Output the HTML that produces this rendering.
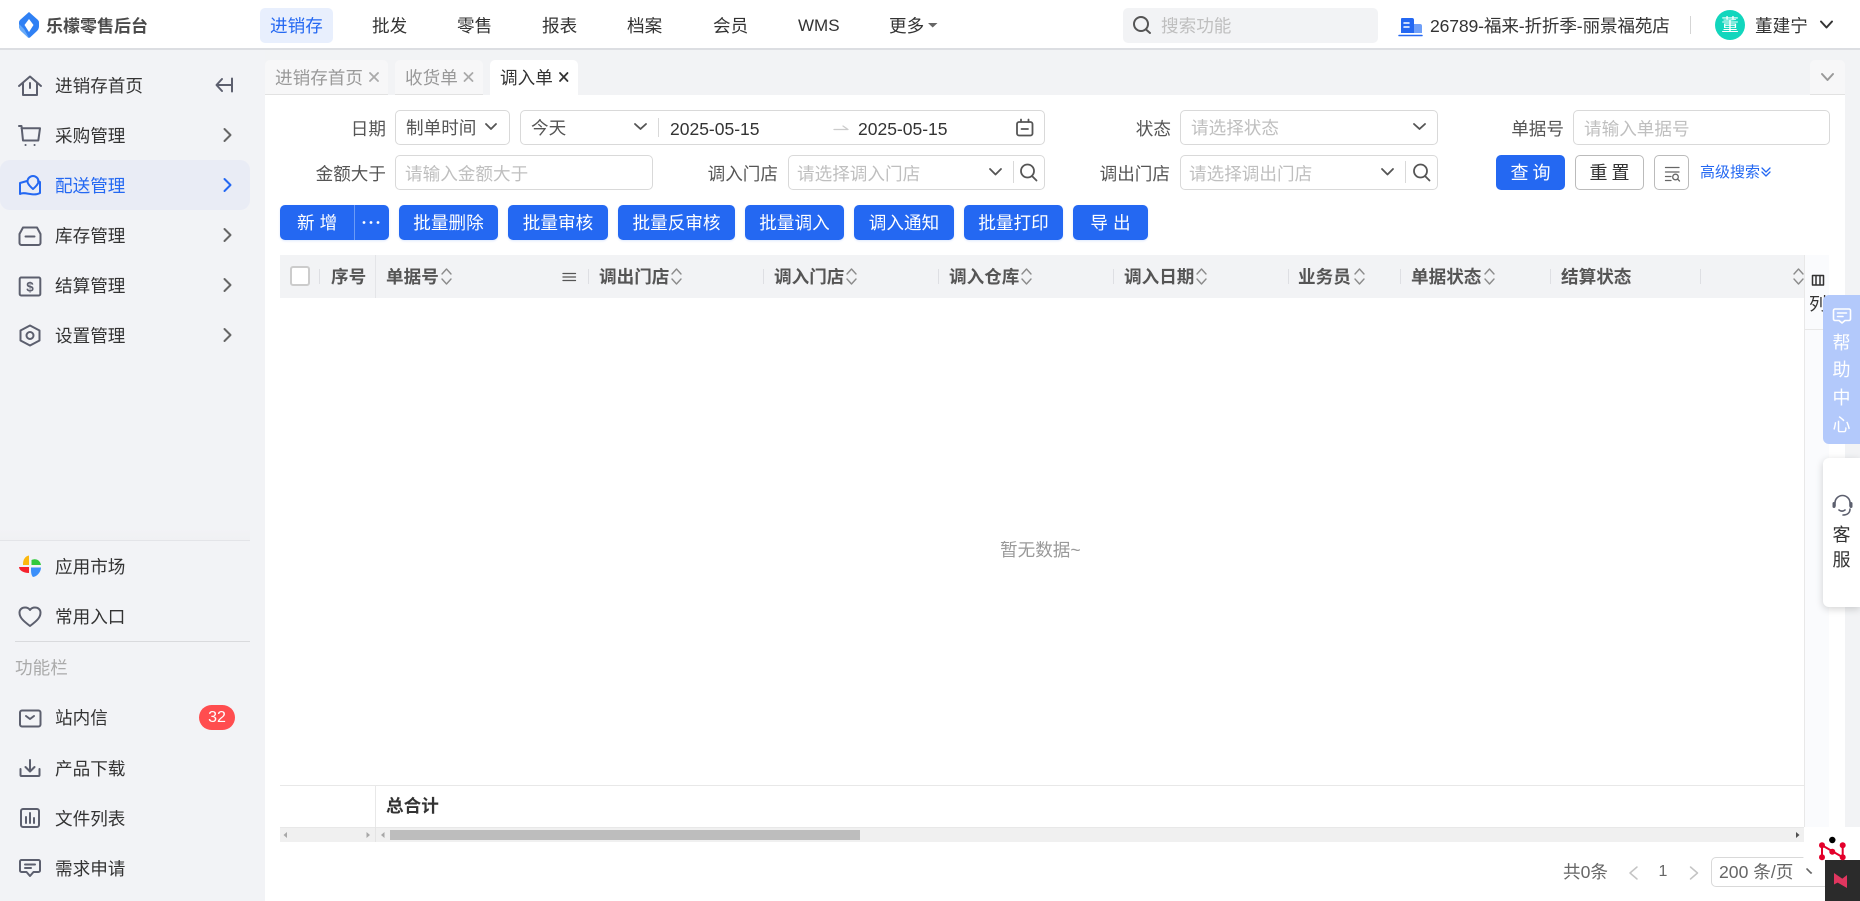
<!DOCTYPE html>
<html lang="zh"><head><meta charset="utf-8"><title>调入单</title>
<style>
*{box-sizing:border-box}
html,body{margin:0;padding:0;width:1860px;height:901px;overflow:hidden;background:#fff}
body{position:relative;font:17.6px/24px "Liberation Sans","Noto Sans CJK SC",sans-serif;color:#333}
.b{position:absolute}
.t{position:absolute;white-space:nowrap;line-height:24px;height:24px}
.r{text-align:right}
.c{text-align:center}
.box{position:absolute;background:#fff;border:1px solid #d9d9d9;border-radius:5px;height:35px}
.ph{color:#bfbfbf}
.lb{color:#555}
.btn{position:absolute;top:205px;height:35px;background:#2468f2;border-radius:5px;color:#fff;text-align:center;line-height:37px;font-size:17.6px;box-shadow:0 1px 2px rgba(36,104,242,.15)}
.th{font-weight:700;color:#555;font-size:17.6px}
.dv{position:absolute;top:269px;width:1px;height:15px;background:#dedfe3}
.nv{color:#333}
.sd{color:#333}
svg{position:absolute;left:0;top:0}
</style></head><body>

<!-- header -->
<div class="b" style="left:0;top:0;width:1860px;height:50px;background:#fff;border-bottom:2px solid #dcdee2"></div>
<div class="t" style="left:46px;top:15px;font-weight:700;font-size:17px;color:#4b4b4b">乐檬零售后台</div>
<div class="b" style="left:260px;top:8px;width:73px;height:35px;background:#e8effd;border-radius:5px"></div>
<div class="t" style="left:270px;top:14px;color:#2468f2">进销存</div>
<div class="t nv" style="left:372px;top:14px">批发</div>
<div class="t nv" style="left:457px;top:14px">零售</div>
<div class="t nv" style="left:542px;top:14px">报表</div>
<div class="t nv" style="left:627px;top:14px">档案</div>
<div class="t nv" style="left:713px;top:14px">会员</div>
<div class="t nv" style="left:798px;top:14px;font-size:17px">WMS</div>
<div class="t nv" style="left:889px;top:14px">更多</div>
<div class="b" style="left:1123px;top:8px;width:255px;height:35px;background:#f2f3f5;border-radius:5px"></div>
<div class="t ph" style="left:1161px;top:14px">搜索功能</div>
<div class="t" style="left:1430px;top:14px;width:240px;letter-spacing:-.15px">26789-福来-折折季-丽景福苑店</div>
<div class="b" style="left:1690px;top:16px;width:1px;height:18px;background:#d5d5d5"></div>
<div class="b c" style="left:1715px;top:10px;width:30px;height:30px;border-radius:50%;background:#12d6bd;color:#fff;line-height:30px">董</div>
<div class="t" style="left:1755px;top:14px">董建宁</div>

<!-- sidebar -->
<div class="b" style="left:0;top:50px;width:265px;height:851px;background:#f2f3f6"></div>
<div class="b" style="left:0;top:160px;width:250px;height:50px;background:#e9ecf5;border-radius:10px"></div>
<div class="t sd" style="left:55px;top:74px">进销存首页</div>
<div class="t sd" style="left:55px;top:124px">采购管理</div>
<div class="t" style="left:55px;top:174px;color:#2468f2">配送管理</div>
<div class="t sd" style="left:55px;top:224px">库存管理</div>
<div class="t sd" style="left:55px;top:274px">结算管理</div>
<div class="t sd" style="left:55px;top:324px">设置管理</div>
<div class="b" style="left:0;top:528px;width:250px;height:12px;background:linear-gradient(#f2f3f6,#f0f1f3)"></div>
<div class="b" style="left:0;top:540px;width:250px;height:1px;background:#e3e4e8"></div>
<div class="t sd" style="left:55px;top:555px">应用市场</div>
<div class="t sd" style="left:55px;top:605px">常用入口</div>
<div class="b" style="left:15px;top:641px;width:235px;height:1px;background:#d9dadd"></div>
<div class="t" style="left:15px;top:656px;color:#aaa">功能栏</div>
<div class="t sd" style="left:55px;top:706px">站内信</div>
<div class="b c" style="left:199px;top:705px;width:36px;height:25px;border-radius:13px;background:#ff4d4f;color:#fff;line-height:25px;font-size:16px">32</div>
<div class="t sd" style="left:55px;top:757px">产品下载</div>
<div class="t sd" style="left:55px;top:807px">文件列表</div>
<div class="t sd" style="left:55px;top:857px">需求申请</div>

<!-- tabs -->
<div class="b" style="left:265px;top:50px;width:1595px;height:45px;background:#f2f3f5"></div>
<div class="b" style="left:1845px;top:95px;width:15px;height:806px;background:#f2f3f5"></div>
<div class="b" style="left:265px;top:60px;width:123px;height:35px;background:#f7f7f8;border-bottom:1px solid #e2e2e2;border-radius:5px 5px 0 0"></div>
<div class="b" style="left:395px;top:60px;width:88px;height:35px;background:#f7f7f8;border-bottom:1px solid #e2e2e2;border-radius:5px 5px 0 0"></div>
<div class="b" style="left:490px;top:60px;width:88px;height:35px;background:#fff;border-radius:5px 5px 0 0"></div>
<div class="b" style="left:1810px;top:60px;width:35px;height:35px;background:#f7f7f8;border-bottom:1px solid #e2e2e2;border-radius:5px 5px 0 0"></div>
<div class="t" style="left:275px;top:66px;color:#999;font-size:17.6px">进销存首页</div>
<div class="t" style="left:405px;top:66px;color:#999;font-size:17.6px">收货单</div>
<div class="t" style="left:500px;top:66px;color:#333;font-size:17.6px">调入单</div>

<!-- filter row 1 -->
<div class="t lb r" style="left:315px;width:71px;top:117px">日期</div>
<div class="box" style="left:395px;top:110px;width:115px"></div>
<div class="t lb" style="left:406px;top:116px">制单时间</div>
<div class="box" style="left:520px;top:110px;width:525px"></div>
<div class="t lb" style="left:531px;top:116px">今天</div>
<div class="b" style="left:658px;top:118px;width:1px;height:19px;background:#d9d9d9"></div>
<div class="t" style="left:670px;top:117px;font-size:17.5px">2025-05-15</div>
<div class="t" style="left:858px;top:117px;font-size:17.5px">2025-05-15</div>
<div class="t lb r" style="left:1100px;width:71px;top:117px">状态</div>
<div class="box" style="left:1180px;top:110px;width:258px"></div>
<div class="t ph" style="left:1191px;top:116px">请选择状态</div>
<div class="t lb r" style="left:1490px;width:74px;top:117px">单据号</div>
<div class="box" style="left:1573px;top:110px;width:257px"></div>
<div class="t ph" style="left:1584px;top:117px">请输入单据号</div>

<!-- filter row 2 -->
<div class="t lb r" style="left:300px;width:86px;top:162px">金额大于</div>
<div class="box" style="left:395px;top:155px;width:258px"></div>
<div class="t ph" style="left:405px;top:162px">请输入金额大于</div>
<div class="t lb r" style="left:690px;width:88px;top:162px">调入门店</div>
<div class="box" style="left:788px;top:155px;width:257px"></div>
<div class="t ph" style="left:797px;top:162px">请选择调入门店</div>
<div class="b" style="left:1013px;top:161px;width:1px;height:22px;background:#d9d9d9"></div>
<div class="t lb r" style="left:1082px;width:88px;top:162px">调出门店</div>
<div class="box" style="left:1180px;top:155px;width:258px"></div>
<div class="t ph" style="left:1189px;top:162px">请选择调出门店</div>
<div class="b" style="left:1405px;top:161px;width:1px;height:22px;background:#d9d9d9"></div>
<div class="b c" style="left:1496px;top:155px;width:69px;height:35px;background:#2468f2;border-radius:5px;color:#fff;line-height:37px;font-size:18px;letter-spacing:4px;text-indent:4px">查询</div>
<div class="b c" style="left:1575px;top:155px;width:69px;height:35px;background:#fff;border:1px solid #bbb;border-radius:5px;line-height:35px;font-size:18px;letter-spacing:4px;text-indent:4px">重置</div>
<div class="b" style="left:1654px;top:155px;width:35px;height:35px;background:#fff;border:1px solid #bbb;border-radius:5px"></div>
<div class="t" style="left:1700px;top:161px;font-size:15px;color:#2468f2">高级搜索</div>

<!-- action buttons -->
<div class="btn" style="left:280px;width:109px;text-align:left;padding-left:17px;letter-spacing:5px">新增</div>
<div class="b" style="left:354px;top:205px;width:1px;height:35px;background:#6a9bf6"></div>
<div class="btn" style="left:399px;width:99px">批量删除</div>
<div class="btn" style="left:508px;width:100px">批量审核</div>
<div class="btn" style="left:618px;width:117px">批量反审核</div>
<div class="btn" style="left:745px;width:99px">批量调入</div>
<div class="btn" style="left:854px;width:100px">调入通知</div>
<div class="btn" style="left:964px;width:99px">批量打印</div>
<div class="btn" style="left:1073px;width:75px;letter-spacing:5px;text-indent:5px">导出</div>

<!-- table -->
<div class="b" style="left:280px;top:255px;width:1524px;height:43px;background:#f2f3f5"></div>
<div class="b" style="left:1804px;top:255px;width:25px;height:572px;background:#fafbfd;border-left:1px solid #e8e8e8"></div>
<div class="b" style="left:1805px;top:329px;width:24px;height:1px;background:#e8e8e8"></div>
<div class="b" style="left:290px;top:266px;width:20px;height:20px;background:#fff;border:2px solid #ccc;border-radius:3px"></div>
<div class="dv" style="left:319px"></div>
<div class="b" style="left:375px;top:255px;width:1px;height:43px;background:#e4e5e8"></div>
<div class="t th" style="left:331px;top:265px">序号</div>
<div class="t th" style="left:386px;top:265px">单据号</div>
<div class="dv" style="left:588px"></div>
<div class="t th" style="left:599px;top:265px">调出门店</div>
<div class="dv" style="left:763px"></div>
<div class="t th" style="left:774px;top:265px">调入门店</div>
<div class="dv" style="left:938px"></div>
<div class="t th" style="left:949px;top:265px">调入仓库</div>
<div class="dv" style="left:1113px"></div>
<div class="t th" style="left:1124px;top:265px">调入日期</div>
<div class="dv" style="left:1288px"></div>
<div class="t th" style="left:1298px;top:265px">业务员</div>
<div class="dv" style="left:1400px"></div>
<div class="t th" style="left:1411px;top:265px">单据状态</div>
<div class="dv" style="left:1550px"></div>
<div class="t th" style="left:1561px;top:265px">结算状态</div>
<div class="dv" style="left:1700px"></div>
<div class="t" style="left:1809px;top:292px;color:#333">列</div>
<div class="t" style="left:1000px;top:538px;color:#999">暂无数据~</div>

<div class="b" style="left:280px;top:785px;width:1524px;height:1px;background:#e8e8e8"></div>
<div class="b" style="left:375px;top:785px;width:1px;height:57px;background:#e8e8e8"></div>
<div class="t" style="left:386px;top:794px;font-weight:700;font-size:17.6px;color:#333">总合计</div>
<div class="b" style="left:280px;top:827px;width:1524px;height:15px;background:#f0f0f0;border-top:1px solid #e8e8e8"></div>
<div class="b" style="left:375px;top:827px;width:1px;height:15px;background:#e4e4e4"></div>
<div class="b" style="left:390px;top:830px;width:470px;height:10px;background:#bdbdbd"></div>

<!-- pagination -->
<div class="t" style="left:1563px;top:860px;color:#666">共0条</div>
<div class="t c" style="left:1653px;width:20px;top:860px;color:#666;font-size:16px">1</div>
<div class="b" style="left:1711px;top:857px;width:120px;height:30px;border:1px solid #d9d9d9;border-radius:5px"></div>
<div class="t" style="left:1719px;top:860px;color:#666">200 条/页</div>

<!-- icons -->
<svg width="1860" height="901" viewBox="0 0 1860 901" fill="none" stroke-linecap="round" stroke-linejoin="round">
 <!-- logo -->
 <path d="M29 12 L38 20 Q39 21 39 23 V26 Q39 29 37 31 L30 37.500 Q29 38 28 37.500 L21 31 Q19 29 19 26 V23 Q19 21 20 20z" fill="#2f80f4"/>
 <path d="M19 24 Q19 29 21 31 L28 37.500 Q28.500 38 29 38 L24 29z" fill="#67aaf8"/>
 <path d="M29 19 L33.500 25 L29 32 L24.500 25z" fill="#fff"/>
 <!-- nav icons -->
 <path d="M928 23 H937.500 L932.700 27.500z" fill="#666"/>
 <circle cx="1141" cy="24" r="7" stroke="#555" stroke-width="2"/><path d="M1146 29.500 L1150 33" stroke="#555" stroke-width="2"/>
 <path d="M1401 19 a1 1 0 0 1 1-1 H1412 a2 2 0 0 1 2 2 V33 H1401z" fill="#2468f2"/>
 <path d="M1414 24 H1420 a2 2 0 0 1 2 2 V33 H1414z" fill="#6f9ff8"/>
 <path d="M1404 23 H1409 M1404 27 H1409" stroke="#fff" stroke-width="1.500"/>
 <path d="M1399 35.500 H1422" stroke="#2468f2" stroke-width="1.500"/>
 <path d="M1821 21.500 L1826.500 27.500 L1832 21.500" stroke="#333" stroke-width="2"/>
 <!-- side icons -->
 <g stroke="#5c5f6e" stroke-width="2">
  <path d="M19 86 L30 76.500 L41 86 M23 83 V95 H37 V83 M30 83 V88"/>
  <path d="M19 126 H21.500 L23 140.500 H38.300 L40 128.300 H21.500"/>
  <path d="M25.500 145 h.1 M34.500 145 h.1"/>
  <path d="M23 227.500 H37 L40.500 234 V243 a2 2 0 0 1-2 2 H21.500 a2 2 0 0 1-2-2 V234z M25.500 236.500 H34.500"/>
  <rect x="19.700" y="277.500" width="20.600" height="18" rx="1.500"/>
  <path d="M30 325.500 L39.500 330.500 V340.500 L30 345.500 L20.500 340.500 V330.500z"/>
  <circle cx="30" cy="335.500" r="3.500"/>
  <path d="M30 626 C22 620 19.500 617 19.500 612.500 C19.500 609.500 22 607.500 25 607.500 C27 607.500 29 608.500 30 610 C31 608.500 33 607.500 35 607.500 C38 607.500 40.500 609.500 40.500 612.500 C40.500 617 38 620 30 626z"/>
  <rect x="20" y="710.500" width="20.500" height="16" rx="2"/><path d="M26 716 L30 719 L34 716"/>
  <path d="M30 760 V771 M25.500 767 L30 771.500 L34.500 767 M20.500 769 V775 a1 1 0 0 0 1 1 H38.500 a1 1 0 0 0 1-1 V769"/>
  <rect x="21" y="809" width="18" height="18" rx="2"/><path d="M26 817 V823 M30 813 V823 M34 818 V823"/>
  <path d="M21.500 860 H38.500 a1.500 1.500 0 0 1 1.500 1.500 V870.500 a1.500 1.500 0 0 1-1.500 1.500 H33.500 L30 876 L26.500 872 H21.500 a1.500 1.500 0 0 1-1.500-1.500 V861.500 a1.500 1.500 0 0 1 1.500-1.500z M25 864.500 H35 M25 868 H31"/>
 </g>
 <text x="30" y="291.500" text-anchor="middle" font-size="13.500" font-weight="700" font-family="Liberation Sans" fill="#5c5f6e">$</text>
 <g stroke="#2468f2" stroke-width="2">
  <path d="M27 181 L20 183 V194 C25 191 33 197 40 193 V182 L38 181"/>
  <path d="M33 176 a5.500 5.500 0 0 1 5.500 5.500 c0 3 -5.500 7.500 -5.500 7.500 s-5.500 -4.500 -5.500 -7.500 a5.500 5.500 0 0 1 5.500-5.500z"/>
 </g>
 <path d="M29 565 V555.500 C25 556 23 560 23 564 V565z" fill="#fbb80f"/>
 <path d="M31.500 565 V560 C36 558 40 560 41 565z" fill="#31c93d"/>
 <path d="M31 567.500 H41 C41 572 37 576.500 33 577 C31 575 31 572 31 567.500z" fill="#3b8ffa"/>
 <path d="M29 567 H19 C19 570 23 573 29 573z" fill="#f5222d"/>
 <path d="M222 79 L216.500 85 L222 91 M217 85 H231 M232 78.500 V91.500" stroke="#5c5f6e" stroke-width="2"/>
 <g stroke="#666" stroke-width="2">
  <path d="M224.500 129 L230.500 135 L224.500 141"/>
  <path d="M224.500 229 L230.500 235 L224.500 241"/>
  <path d="M224.500 279 L230.500 285 L224.500 291"/>
  <path d="M224.500 329 L230.500 335 L224.500 341"/>
 </g>
 <path d="M224.500 179 L230.500 185 L224.500 191" stroke="#2468f2" stroke-width="2"/>
 <!-- tab closes -->
 <path d="M370 73 L378 81 M378 73 L370 81 M464.500 73 L472.500 81 M472.500 73 L464.500 81" stroke="#aaa" stroke-width="1.800"/>
 <path d="M560 73 L567.500 81 M567.500 73 L560 81" stroke="#333" stroke-width="1.800"/>
 <path d="M1822 74 L1827.500 80 L1833 74" stroke="#999" stroke-width="2"/>
 <!-- form chevrons -->
 <g stroke="#555" stroke-width="1.800">
  <path d="M486 124 L491 129 L496 124"/>
  <path d="M635 124 L640.500 129 L646 124"/>
  <path d="M1414 124 L1419.500 129 L1425 124"/>
  <path d="M990 169 L995.500 174.500 L1001 169"/>
  <path d="M1382 169 L1387.500 174.500 L1393 169"/>
  <rect x="1017" y="122" width="15.500" height="13.500" rx="2"/>
  <path d="M1021 119.500 V122 M1028.500 119.500 V122 M1021.500 129 H1028"/>
  <circle cx="1027.500" cy="171" r="6.500"/><path d="M1032 176 L1036.500 180.500"/>
  <circle cx="1420.500" cy="171" r="6.500"/><path d="M1425 176 L1429.500 180.500"/>
 </g>
 <path d="M834 129.500 H848 L843 126" stroke="#ccc" stroke-width="1.300"/>
 <g stroke="#666" stroke-width="1.300">
  <path d="M1665.500 167.500 H1679 M1665.500 172 H1679 M1665.500 176.500 H1671 M1665.500 180.500 H1671"/>
  <circle cx="1675.500" cy="177" r="2.800"/><path d="M1677.500 179 L1679.500 181"/>
 </g>
 <path d="M1762 168 L1766 172 L1770 168 M1762 172 L1766 176 L1770 172" stroke="#2468f2" stroke-width="1.300"/>
 <circle cx="364" cy="222.500" r="1.400" fill="#fff"/><circle cx="371" cy="222.500" r="1.400" fill="#fff"/><circle cx="378" cy="222.500" r="1.400" fill="#fff"/>
 <!-- sort icons -->
 <g stroke="#8b8b8b" stroke-width="1.400">
  <path d="M442 274 L446.500 269 L451 274 M442 279 L446.500 284 L451 279"/>
  <path d="M672 274 L676.500 269 L681 274 M672 279 L676.500 284 L681 279"/>
  <path d="M847 274 L851.500 269 L856 274 M847 279 L851.500 284 L856 279"/>
  <path d="M1022 274 L1026.500 269 L1031 274 M1022 279 L1026.500 284 L1031 279"/>
  <path d="M1197 274 L1201.500 269 L1206 274 M1197 279 L1201.500 284 L1206 279"/>
  <path d="M1355 274 L1359.500 269 L1364 274 M1355 279 L1359.500 284 L1364 279"/>
  <path d="M1485 274 L1489.500 269 L1494 274 M1485 279 L1489.500 284 L1494 279"/>
  <path d="M1794 274 L1798.500 269 L1803 274 M1794 279 L1798.500 284 L1803 279"/>
 </g>
 <path d="M563 273.500 H575.500 M563 277 H575.500 M563 280.500 H575.500" stroke="#555" stroke-width="1.300"/>
 <path d="M1812.500 275.500 H1823.500 V285 H1812.500z M1816 275.500 V285 M1820 275.500 V285" stroke="#333" stroke-width="1.500"/>
 <!-- scrollbar arrows -->
 <path d="M283.500 835 L287 832 V838z M370 835 L366.500 832 V838z M381 835 L384.500 832 V838z" fill="#a8a8a8"/>
 <path d="M1799.500 835 L1796 832 V838z" fill="#505050"/>
 <!-- pagination arrows -->
 <path d="M1637 867 L1630 873 L1637 879" stroke="#c4c4c4" stroke-width="1.500"/>
 <path d="M1690.500 867 L1697.500 873 L1690.500 879" stroke="#c4c4c4" stroke-width="1.500"/>
 <path d="M1807 869 L1811 873 L1815 869" stroke="#666" stroke-width="1.600"/>
</svg>

<!-- help float -->
<div class="b" style="left:1823px;top:295px;width:37px;height:149px;background:#b3c9fb;border-radius:6px 0 0 6px"></div>
<div class="t c" style="left:1823px;width:37px;top:331px;color:#fff;font-size:18px">帮</div>
<div class="t c" style="left:1823px;width:37px;top:358px;color:#fff;font-size:18px">助</div>
<div class="t c" style="left:1823px;width:37px;top:386px;color:#fff;font-size:18px">中</div>
<div class="t c" style="left:1823px;width:37px;top:413px;color:#fff;font-size:18px">心</div>
<div class="b" style="left:1823px;top:458px;width:37px;height:149px;background:#fff;border-radius:6px 0 0 6px;box-shadow:0 2px 8px rgba(0,0,0,.18)"></div>
<div class="t c" style="left:1823px;width:37px;top:523px;color:#333;font-size:18px">客</div>
<div class="t c" style="left:1823px;width:37px;top:548px;color:#333;font-size:18px">服</div>
<!-- bottom-right floats -->
<div class="b" style="left:1803px;top:827px;width:60px;height:52px;border-radius:26px 0 0 26px;background:#fff"></div>
<div class="b" style="left:1825px;top:860px;width:35px;height:41px;background:#2b2b2b"></div>
<svg width="1860" height="901" viewBox="0 0 1860 901" fill="none" stroke-linecap="round" stroke-linejoin="round">
 <path d="M1835 309 H1849 a1.500 1.500 0 0 1 1.500 1.500 V319 a1.500 1.500 0 0 1-1.500 1.500 H1845 L1842 323 L1839 320.500 H1835 a1.500 1.500 0 0 1-1.500-1.500 V310.500 a1.500 1.500 0 0 1 1.500-1.500z M1837.500 313 H1846.500 M1837.500 316.500 H1843" stroke="#fff" stroke-width="1.600"/>
 <path d="M1835 506 V503 a7.500 7.500 0 0 1 15 0 V506 M1850 509 C1850 513 1847 515 1843 515 M1839 510 C1841 511.500 1843 511.500 1845 510" stroke="#5c5f6e" stroke-width="1.600"/>
 <rect x="1832.500" y="502" width="3" height="6" rx="1.500" fill="#5c5f6e"/><rect x="1849.500" y="502" width="3" height="6" rx="1.500" fill="#5c5f6e"/>
 <path d="M1822 845.300 V857.300 M1822 845.300 L1842.700 857.300 M1842.700 845.300 V857.300" stroke="#e3002b" stroke-width="2"/>
 <g fill="#e3002b"><circle cx="1822" cy="845.300" r="3"/><circle cx="1842.700" cy="845.300" r="3"/><circle cx="1832.300" cy="851.700" r="3"/><circle cx="1822" cy="857.300" r="3"/><circle cx="1842.700" cy="857.300" r="3"/></g>
 <circle cx="1832.300" cy="840" r="3.200" fill="#000"/>
 <path d="M1834 873 L1843.500 879.500 L1834 884.500z" fill="#e0365f"/>
 <path d="M1847 875 V888 L1837.500 882.500z" fill="#e0365f"/>
</svg>
</body></html>
